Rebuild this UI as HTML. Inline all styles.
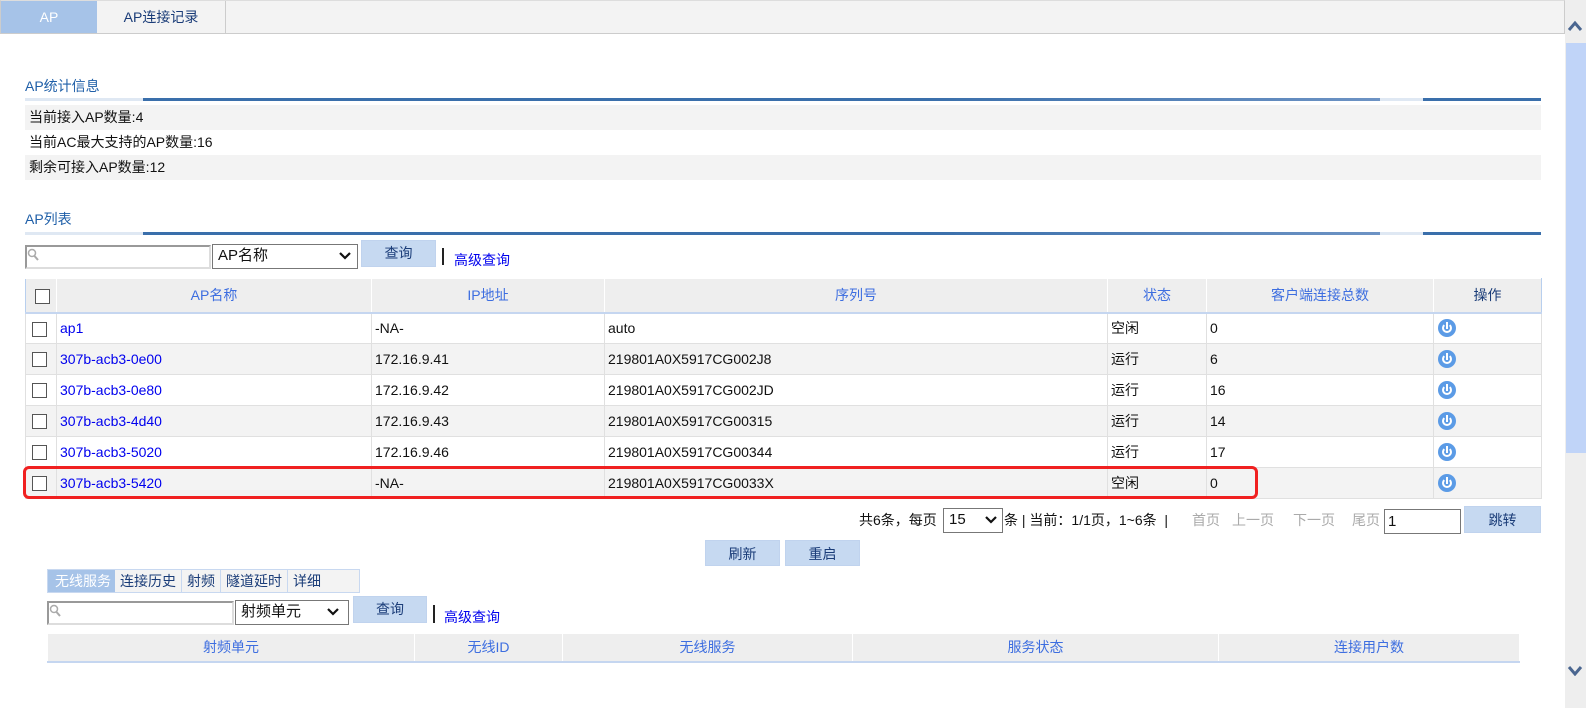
<!DOCTYPE html>
<html><head><meta charset="utf-8">
<style>
*{box-sizing:border-box;margin:0;padding:0}
body{width:1586px;height:708px;overflow:hidden;background:#fff;font-family:"Liberation Sans","Noto Sans CJK SC",sans-serif;font-size:14px;color:#111;position:relative}
.a{position:absolute}
.tabbar{left:0;top:0;width:1565px;height:34px;background:#f3f3f3;border:1px solid #ccc;border-top:1px solid #ddd}
.t{position:absolute;top:0;height:32px;line-height:32px;text-align:center;font-size:14px}
.ttl{color:#1f5fa8;font-size:14px}
.bar{height:3px;background:linear-gradient(90deg,#dfe8f3 0,#dfe8f3 118px,#3a6fab 118px,#3a6fab 900px,#6d93c4 1355px,#dfe8f3 1355px,#dfe8f3 1398px,#3a6fab 1398px)}
.row{left:25px;width:1516px;height:25px;line-height:25px;padding-left:4px}
.g{background:#f3f3f3}
.inp{border:2px solid #999;border-right-color:#ddd;border-bottom-color:#ddd;background:#fff}
.sel{border:1px solid #777;background:#fff;padding-left:5px;line-height:22px;font-size:15px}
.btn{background:#c6d9f1;border:1px solid #c0d3ee;text-align:center;color:#1a3c78;font-size:14px}
.lnk{color:#0000ee}
table{border-collapse:collapse;table-layout:fixed}
td{border:1px solid #e0e0e0;padding-left:3px;height:31px;font-size:14px}
th{font-weight:normal;color:#3d6ee0;background:#eee;border:1px solid #fff;border-bottom:2px solid #c5d6f0;height:34px;font-size:14px}
.cb{width:15px;height:15px;border:1px solid #555;background:#fff;display:inline-block;margin-left:6px;vertical-align:middle}
.pw{width:18px;height:18px;border-radius:50%;background:#5b9be6;display:inline-block;position:relative;vertical-align:middle;margin-left:1px}
.pw:before{content:"";position:absolute;left:4px;top:4px;width:10px;height:10px;border:2px solid #fff;border-radius:50%;border-top-color:transparent;box-sizing:border-box}
.pw:after{content:"";position:absolute;left:8px;top:3px;width:2px;height:7px;background:#fff}
.gray{color:#aaa}
</style></head><body>
<div class="a tabbar">
 <div class="t" style="left:0;width:96px;background:#a6c3e8;color:#fff">AP</div>
 <div class="t" style="left:96px;width:129px;color:#1a3c78;border-right:1px solid #ccc">AP连接记录</div>
</div>
<div class="a" style="left:1565px;top:0;width:21px;height:708px;background:#eee"></div>
<div class="a" style="left:1566px;top:43px;width:20px;height:410px;background:#c0d4f8"></div>
<svg class="a" style="left:1567px;top:20px" width="16" height="12"><path d="M2 10 L8 3 L14 10" stroke="#4a6690" stroke-width="3" fill="none"/></svg>
<svg class="a" style="left:1567px;top:664px" width="16" height="12"><path d="M2 3 L8 10 L14 3" stroke="#4a6690" stroke-width="3" fill="none"/></svg>

<div class="a ttl" style="left:25px;top:76px">AP统计信息</div>
<div class="a bar" style="left:25px;top:98px;width:1516px"></div>
<div class="a row g" style="top:105px">当前接入AP数量:4</div>
<div class="a row" style="top:130px">当前AC最大支持的AP数量:16</div>
<div class="a row g" style="top:155px">剩余可接入AP数量:12</div>

<div class="a ttl" style="left:25px;top:209px">AP列表</div>
<div class="a bar" style="left:25px;top:232px;width:1516px"></div>
<div class="a inp" style="left:25px;top:245px;width:186px;height:24px"></div>
<svg class="a" style="left:27px;top:248px" width="12" height="14"><circle cx="5" cy="5" r="3.5" stroke="#aaa" stroke-width="1.5" fill="none"/><path d="M7.5 8 L11 12" stroke="#aaa" stroke-width="2"/></svg>
<div class="a sel" style="left:212px;top:244px;width:146px;height:25px">AP名称</div>
<svg class="a" style="left:338px;top:250px" width="14" height="12"><path d="M2 3 L7 8 L12 3" stroke="#111" stroke-width="2.2" fill="none"/></svg>
<div class="a btn" style="left:361px;top:240px;width:75px;height:27px;line-height:25px">查询</div>
<div class="a" style="left:442px;top:248px;width:2px;height:17px;background:#222"></div>
<div class="a lnk" style="left:454px;top:250px">高级查询</div>

<table class="a" style="left:25px;top:278px;width:1516px;border:1px solid #b8cfee">
<colgroup><col style="width:31px"><col style="width:315px"><col style="width:233px"><col style="width:503px"><col style="width:99px"><col style="width:227px"><col style="width:108px"></colgroup>
<tr><th style="border-left:1px solid #b8cfee"><span class="cb" style="margin-left:2px"></span></th><th>AP名称</th><th>IP地址</th><th>序列号</th><th>状态</th><th>客户端连接总数</th><th style="color:#1a3c78;border-right:1px solid #b8cfee">操作</th></tr>
<tr><td style="padding:0"><span class="cb"></span></td><td class="lnk">ap1</td><td>-NA-</td><td>auto</td><td>空闲</td><td>0</td><td><span class="pw"></span></td></tr>
<tr class="g"><td style="padding:0"><span class="cb"></span></td><td class="lnk">307b-acb3-0e00</td><td>172.16.9.41</td><td>219801A0X5917CG002J8</td><td>运行</td><td>6</td><td><span class="pw"></span></td></tr>
<tr><td style="padding:0"><span class="cb"></span></td><td class="lnk">307b-acb3-0e80</td><td>172.16.9.42</td><td>219801A0X5917CG002JD</td><td>运行</td><td>16</td><td><span class="pw"></span></td></tr>
<tr class="g"><td style="padding:0"><span class="cb"></span></td><td class="lnk">307b-acb3-4d40</td><td>172.16.9.43</td><td>219801A0X5917CG00315</td><td>运行</td><td>14</td><td><span class="pw"></span></td></tr>
<tr><td style="padding:0"><span class="cb"></span></td><td class="lnk">307b-acb3-5020</td><td>172.16.9.46</td><td>219801A0X5917CG00344</td><td>运行</td><td>17</td><td><span class="pw"></span></td></tr>
<tr class="g"><td style="padding:0"><span class="cb"></span></td><td class="lnk">307b-acb3-5420</td><td>-NA-</td><td>219801A0X5917CG0033X</td><td>空闲</td><td>0</td><td><span class="pw"></span></td></tr>
</table>
<div class="a" style="left:23px;top:466px;width:1235px;height:33px;border:3px solid #f02020;border-radius:6px"></div>

<div class="a" style="left:859px;top:510px;white-space:nowrap">共6条，每页</div>
<div class="a sel" style="left:943px;top:508px;width:60px;height:25px;font-size:15px">15</div>
<svg class="a" style="left:984px;top:514px" width="14" height="12"><path d="M2 3 L7 8 L12 3" stroke="#111" stroke-width="2.2" fill="none"/></svg>
<div class="a" style="left:1004px;top:510px;white-space:nowrap">条 | 当前：1/1页，1~6条 &nbsp;|</div>
<div class="a gray" style="left:1192px;top:510px">首页</div>
<div class="a gray" style="left:1232px;top:510px">上一页</div>
<div class="a gray" style="left:1293px;top:510px">下一页</div>
<div class="a gray" style="left:1321px;top:510px;display:none"></div>
<div class="a gray" style="left:1352px;top:510px">尾页</div>
<div class="a inp" style="left:1384px;top:509px;width:77px;height:25px;border:1px solid #777;padding-left:3px;line-height:23px;font-size:15px">1</div>
<div class="a btn" style="left:1464px;top:506px;width:77px;height:27px;line-height:26px">跳转</div>

<div class="a btn" style="left:705px;top:540px;width:75px;height:26px;line-height:26px">刷新</div>
<div class="a btn" style="left:785px;top:540px;width:75px;height:26px;line-height:26px">重启</div>

<div class="a" style="left:47px;top:569px;height:24px;width:313px;background:#f3f3f3;border:1px solid #c8d8f0;font-size:14px;line-height:22px;color:#1a3c78;white-space:nowrap">
 <span style="display:inline-block;background:#a6c3e8;color:#fff;padding:0 4px 0 7px">无线服务</span><span style="display:inline-block;padding:0 5px;border-right:1px solid #c8d8f0">连接历史</span><span style="display:inline-block;padding:0 5px;border-right:1px solid #c8d8f0">射频</span><span style="display:inline-block;padding:0 5px;border-right:1px solid #c8d8f0">隧道延时</span><span style="display:inline-block;padding:0 5px">详细</span>
</div>
<div class="a inp" style="left:47px;top:601px;width:187px;height:24px"></div>
<svg class="a" style="left:49px;top:604px" width="12" height="14"><circle cx="5" cy="5" r="3.5" stroke="#aaa" stroke-width="1.5" fill="none"/><path d="M7.5 8 L11 12" stroke="#aaa" stroke-width="2"/></svg>
<div class="a sel" style="left:235px;top:600px;width:114px;height:25px">射频单元</div>
<svg class="a" style="left:326px;top:606px" width="14" height="12"><path d="M2 3 L7 8 L12 3" stroke="#111" stroke-width="2.2" fill="none"/></svg>
<div class="a btn" style="left:353px;top:596px;width:74px;height:27px;line-height:25px">查询</div>
<div class="a" style="left:433px;top:605px;width:2px;height:18px;background:#222"></div>
<div class="a lnk" style="left:444px;top:607px">高级查询</div>

<table class="a" style="left:47px;top:633px;width:1472px;border:1px solid #b8cfee">
<colgroup><col style="width:367px"><col style="width:148px"><col style="width:290px"><col style="width:366px"><col style="width:301px"></colgroup>
<tr><th style="height:28px">射频单元</th><th style="height:28px">无线ID</th><th style="height:28px">无线服务</th><th style="height:28px">服务状态</th><th style="height:28px">连接用户数</th></tr>
</table>
</body></html>
